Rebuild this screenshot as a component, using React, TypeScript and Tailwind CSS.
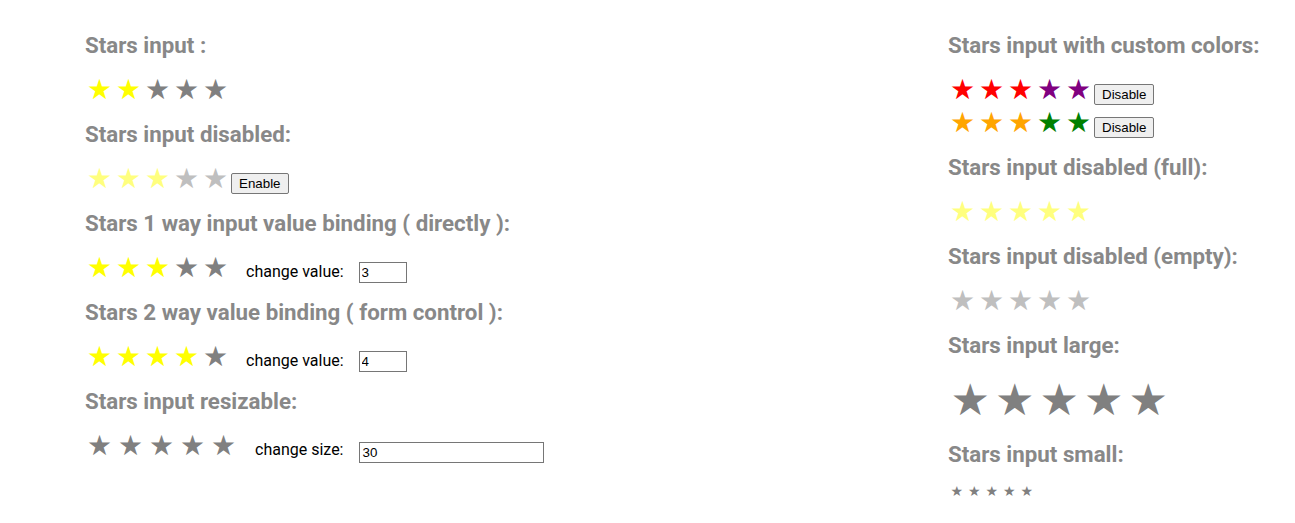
import * as React from "react";

type StarsProps = {
  value: number;
  size?: "small" | "default" | "large" | number;
  on?: string;
  off?: string;
  disabled?: boolean;
};

const Stars = ({ value, size = "default", on = "text-[#ffff00]", off = "text-[#808080]", disabled }: StarsProps) => {
  let cls = "text-[28px] leading-[33px] w-[29px]";
  let style: React.CSSProperties | undefined;
  if (size === "large") cls = "text-[44px] leading-[53px] w-[44.5px]";
  else if (size === "small") cls = "text-[14px] leading-[19px] w-[17.5px]";
  else if (typeof size === "number") {
    cls = "";
    style = { fontSize: size * 0.93, lineHeight: `${size + 3}px`, width: size + 1 };
  }
  return (
    <span
      className={`inline-flex items-baseline font-['DejaVu_Sans',sans-serif] ${disabled ? "opacity-50" : ""} ${
        typeof size === "number" ? "-ml-[1px]" : ""
      }`}
    >
      {[1, 2, 3, 4, 5].map((i) => (
        <span key={i} className={`${cls} inline-block text-center ${i <= value ? on : off}`} style={style}>
          ★
        </span>
      ))}
    </span>
  );
};

const Heading = ({ children }: { children: React.ReactNode }) => (
  <h3 className="pt-[1px] text-[22.3px] leading-[24px] font-bold text-[#888888] font-['Roboto',sans-serif] whitespace-nowrap">
    {children}
  </h3>
);

const Btn = ({ children }: { children: React.ReactNode }) => (
  <button className="ml-[1px] bg-[#efefef] border border-[#767676] rounded-[2px] px-[7px] py-[1px] text-[13.33px] leading-[17px] text-black font-['Liberation_Sans',sans-serif]">
    {children}
  </button>
);

const Field = ({ value, wide }: { value: string; wide?: boolean }) => (
  <input
    readOnly
    value={value}
    className={`${wide ? "w-[185px]" : "w-[48px]"} h-[21px] border border-[#767676] px-[2px] text-[13.33px] text-black font-['Liberation_Sans',sans-serif] outline-none`}
  />
);

const Section = ({ title, children, last }: { title: string; children: React.ReactNode; last?: boolean }) => (
  <div className={last ? "" : "mb-[15px]"}>
    <Heading>{title}</Heading>
    <div className="mt-[16px] flex flex-col">{children}</div>
  </div>
);

export default function App() {
  return (
    <div className="w-[1295px] min-h-[523px] bg-white flex pl-[85px] pt-[32px] font-['Roboto',sans-serif]">
      <div className="w-[863px] flex flex-col">
        <Section title="Stars input :">
          <div className="flex items-baseline">
            <Stars value={2} />
          </div>
        </Section>
        <Section title="Stars input disabled:">
          <div className="flex items-baseline">
            <Stars value={3} disabled />
            <Btn>Enable</Btn>
          </div>
        </Section>
        <Section title="Stars 1 way input value binding ( directly ):">
          <div className="flex items-baseline">
            <Stars value={3} />
            <span className="ml-[16px] text-[16px] text-black">change value:</span>
            <span className="ml-[15px]">
              <Field value="3" />
            </span>
          </div>
        </Section>
        <Section title="Stars 2 way value binding ( form control ):">
          <div className="flex items-baseline">
            <Stars value={4} />
            <span className="ml-[16px] text-[16px] text-black">change value:</span>
            <span className="ml-[15px]">
              <Field value="4" />
            </span>
          </div>
        </Section>
        <Section title="Stars input resizable:" last>
          <div className="flex items-baseline">
            <Stars value={0} size={30} />
            <span className="ml-[16px] text-[16px] text-black">change size:</span>
            <span className="ml-[16px] relative top-[2px]">
              <Field value="30" wide />
            </span>
          </div>
        </Section>
      </div>
      <div className="flex flex-col">
        <Section title="Stars input with custom colors:">
          <div className="flex items-baseline">
            <Stars value={3} on="text-[#ff0000]" off="text-[#800080]" />
            <Btn>Disable</Btn>
          </div>
          <div className="flex items-baseline">
            <Stars value={3} on="text-[#ffa500]" off="text-[#008000]" />
            <Btn>Disable</Btn>
          </div>
        </Section>
        <Section title="Stars input disabled (full):">
          <div className="flex items-baseline">
            <Stars value={5} disabled />
          </div>
        </Section>
        <Section title="Stars input disabled (empty):">
          <div className="flex items-baseline">
            <Stars value={0} disabled />
          </div>
        </Section>
        <Section title="Stars input large:">
          <div className="flex items-baseline">
            <Stars value={0} size="large" />
          </div>
        </Section>
        <Section title="Stars input small:" last>
          <div className="flex items-baseline">
            <Stars value={0} size="small" />
          </div>
        </Section>
      </div>
    </div>
  );
}
